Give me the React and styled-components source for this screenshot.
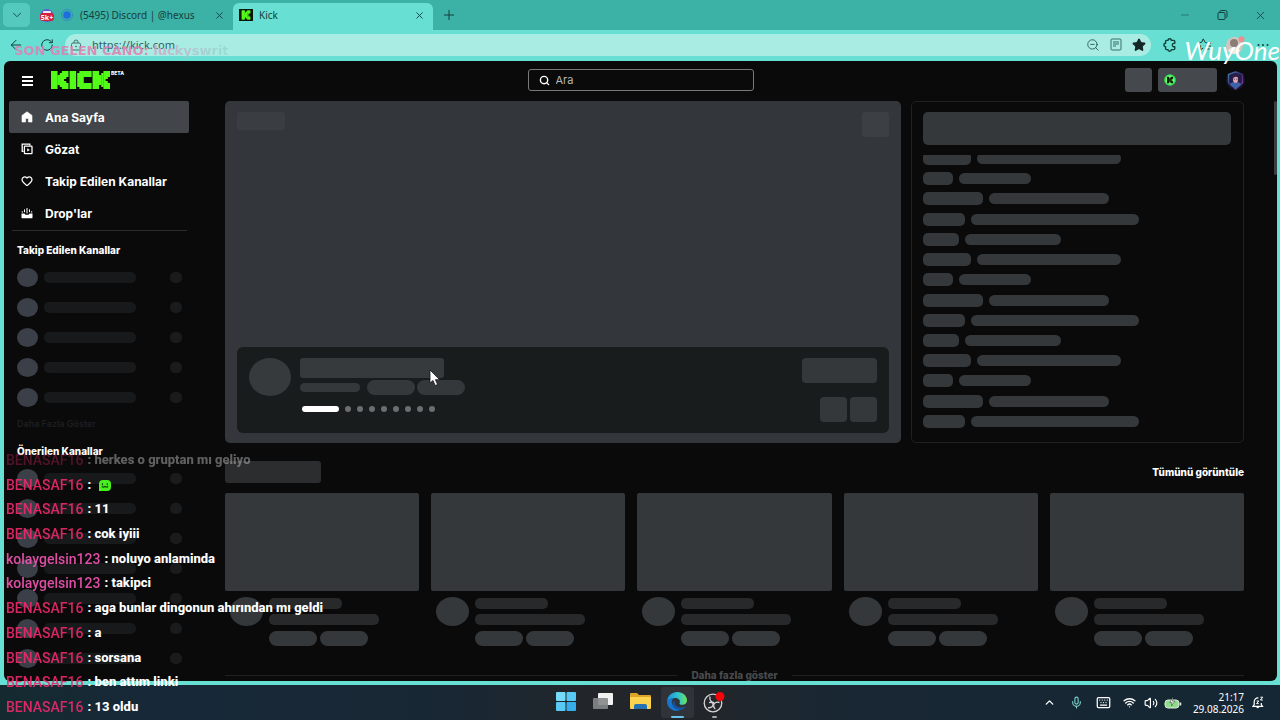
import React, { useState } from "react";
import styled, { createGlobalStyle } from "styled-components";
import {
  ArrowLeft,
  ChevronDown,
  ChevronUp,
  Heart,
  Keyboard,
  Mic,
  Minus,
  Plus,
  Puzzle,
  RotateCw,
  Search,
  Star,
  Volume2,
  Wifi,
  X,
  ZoomOut,
} from "lucide-react";

const GlobalStyle = createGlobalStyle`
  * {
    box-sizing: border-box;
  }
  body {
    margin: 0;
    overflow: hidden;
    background: #16252f;
  }
  button {
    border: 0;
    padding: 0;
    background: none;
    color: inherit;
    font: inherit;
  }
  a {
    color: inherit;
    text-decoration: none;
  }
  svg {
    display: block;
    flex-shrink: 0;
  }
`;

const Desktop = styled.div`
  position: relative;
  display: flex;
  flex-direction: column;
  height: 100vh;
  overflow: hidden;
  font-family: "Inter", sans-serif;
`;

/* browser window */
const Browser = styled.div`
  flex: 1;
  min-height: 0;
  display: flex;
  flex-direction: column;
  background: #67dfd2;
  color: #14403d;
  font-family: "Noto Sans", sans-serif;
`;
const TabBar = styled.div`
  display: flex;
  height: 30px;
  padding-left: 3px;
  background: #3cb1a6;
`;
const TabMenu = styled.button`
  display: flex;
  align-items: center;
  justify-content: center;
  width: 27px;
  height: 24px;
  margin-top: 3px;
  border-radius: 5px;
  background: #55c9bd;
`;
const Tab = styled.div`
  display: flex;
  align-items: center;
  gap: 6px;
  width: ${(props) => (props.$active ? "200px" : "203px")};
  height: 27px;
  margin-top: 3px;
  padding: 0 8px 3px ${(props) => (props.$active ? "6px" : "10px")};
  border-radius: 6px 6px 0 0;
  background: ${(props) => (props.$active ? "#67dfd2" : "transparent")};
  font-size: 10px;
`;
const TabTitle = styled.span`
  flex: 1;
  white-space: nowrap;
`;
const NewTab = styled.button`
  display: flex;
  align-items: center;
  margin-left: 8px;
`;
const WindowButtons = styled.div`
  display: flex;
  align-items: center;
  gap: 26px;
  margin-left: auto;
  padding-right: 13px;
`;
const Toolbar = styled.div`
  display: flex;
  align-items: center;
  height: 31px;
  padding: 0 9px 2px 8px;
`;
const ToolButton = styled.button`
  display: flex;
  align-items: center;
  justify-content: center;
  width: 16px;
  height: 16px;
  margin-right: ${(props) => props.$gap || "15px"};
`;
const Address = styled.div`
  flex: 1;
  display: flex;
  align-items: center;
  gap: 10px;
  height: 22px;
  margin-right: 11px;
  padding: 0 5px;
  border-radius: 11px;
  background: #a9ece3;
`;
const AddressInput = styled.input`
  flex: 1;
  min-width: 0;
  border: 0;
  padding: 0;
  background: transparent;
  outline: none;
  color: #35605d;
  font-family: "Noto Sans", sans-serif;
  font-size: 11px;
`;

/* kick page */
const Page = styled.div`
  flex: 1;
  min-height: 0;
  display: flex;
  flex-direction: column;
  margin: 0 3px 4px 4px;
  border-radius: 6px;
  overflow: hidden;
  background: #0a0a0b;
  color: #ffffff;
  font-family: "Inter", sans-serif;
`;
const Header = styled.header`
  display: grid;
  grid-template-columns: 1fr 226px 1fr;
  align-items: center;
  height: 40px;
  flex-shrink: 0;
  padding: 0 18px 2px;
`;
const Brand = styled.div`
  display: flex;
  align-items: center;
  gap: 18px;
`;
const LogoLink = styled.a`
  display: flex;
  align-items: flex-start;
  gap: 1px;
`;
const Beta = styled.span`
  font-size: 5px;
  line-height: 5px;
  font-weight: 800;
`;
const SearchBox = styled.label`
  display: flex;
  align-items: center;
  gap: 6px;
  height: 22px;
  padding: 0 10px;
  border: 1px solid #77797b;
  border-radius: 3px;
`;
const SearchInput = styled.input`
  flex: 1;
  min-width: 0;
  border: 0;
  padding: 0;
  outline: none;
  background: transparent;
  color: #ffffff;
  font-family: "Inter", sans-serif;
  font-size: 11px;
  &::placeholder {
    color: #b4b6b8;
    opacity: 1;
  }
`;
const Account = styled.div`
  display: flex;
  align-items: center;
  justify-content: flex-end;
  gap: 6px;
  padding-right: 14px;
`;
const AccountButton = styled.button`
  display: flex;
  align-items: center;
  width: ${(props) => props.$width};
  height: 24px;
  padding-left: 6px;
  border-radius: 3px;
  background: #45484c;
`;
const AvatarButton = styled.button`
  margin-left: 3px;
`;
const Content = styled.div`
  flex: 1;
  min-height: 0;
  display: flex;
  padding-left: 5px;
`;
const Sidebar = styled.aside`
  width: 180px;
  flex-shrink: 0;
`;
const NavItem = styled.a`
  display: flex;
  align-items: center;
  gap: 12px;
  height: 32px;
  padding-left: 12px;
  border-radius: 2px;
  background: ${(props) => (props.$active ? "#42464a" : "transparent")};
  font-size: 12px;
  font-weight: 700;
`;
const Divider = styled.hr`
  height: 1px;
  margin: 1px 2px 0 3px;
  border: 0;
  background: #2a2c2e;
`;
const SideTitle = styled.h2`
  margin: 0;
  padding: 11px 0 4px 8px;
  font-size: 10px;
  line-height: 16px;
  font-weight: 800;
`;
const ChannelRow = styled.div`
  display: flex;
  align-items: center;
  gap: 6px;
  height: 30px;
  padding: 0 7px 0 8px;
`;
const MoreChannels = styled.button`
  display: block;
  padding: 4px 0 0 8px;
  color: #1d1f20;
  font-size: 9px;
  line-height: 16px;
  font-weight: 600;
`;

const Bone = styled.div`
  flex-shrink: 0;
  width: ${(props) => props.$w};
  height: ${(props) => props.$h};
  border-radius: ${(props) => props.$r || "5px"};
  background: ${(props) => props.$tone || "#34383a"};
`;
const EndBone = styled(Bone)`
  margin-left: auto;
`;

const Main = styled.main`
  flex: 1;
  min-width: 0;
  overflow: hidden;
  padding: 0 30px 0 36px;
`;
const Scrollbar = styled.div`
  width: 3px;
  height: 74px;
  border-radius: 2px;
  background: #3b3e40;
`;
const TopRow = styled.div`
  display: flex;
  gap: 10px;
`;
const Hero = styled.section`
  flex: 1;
  display: flex;
  flex-direction: column;
  justify-content: space-between;
  min-height: 342px;
  padding: 11px 12px 10px;
  border-radius: 5px;
  background: #33373c;
`;
const HeroTop = styled.div`
  display: flex;
  justify-content: space-between;
  align-items: flex-start;
`;
const HeroCard = styled.div`
  display: flex;
  gap: 9px;
  padding: 11px 12px;
  border-radius: 6px;
  background: #181c1d;
`;
const HeroInfo = styled.div`
  flex: 1;
`;
const HeroTags = styled.div`
  display: flex;
  align-items: center;
  gap: 2px;
  margin: 2px 0 11px;
`;
const HeroTagSpace = styled.div`
  width: 65px;
`;
const Dots = styled.div`
  display: flex;
  gap: 6px;
  padding-left: 2px;
`;
const Dot = styled.button`
  width: ${(props) => (props.$active ? "37px" : "6px")};
  height: 6px;
  border-radius: 3px;
  background: ${(props) => (props.$active ? "#ffffff" : "#6b6e70")};
`;
const HeroActions = styled.div`
  display: flex;
  flex-direction: column;
  align-items: flex-end;
  gap: 14px;
`;
const HeroArrows = styled.div`
  display: flex;
  gap: 3px;
`;
const ChatPanel = styled.section`
  width: 333px;
  display: flex;
  flex-direction: column;
  gap: 10px;
  padding: 10px 12px 14px 11px;
  border: 1px solid #1f2123;
  border-radius: 5px;
`;
const ChatList = styled.div`
  flex: 1;
  display: flex;
  flex-direction: column;
  justify-content: space-between;
  overflow: hidden;
`;
const ChatRow = styled.div`
  display: flex;
  align-items: center;
  gap: 6px;
  &:first-child {
    margin-top: -3px;
  }
`;
const SectionHead = styled.div`
  display: flex;
  align-items: center;
  justify-content: space-between;
  margin: 18px 0 10px;
`;
const SeeAll = styled.a`
  font-size: 10px;
  line-height: 16px;
  font-weight: 800;
`;
const CardGrid = styled.div`
  display: grid;
  grid-template-columns: repeat(5, 1fr);
  gap: 12px;
`;
const CardInfo = styled.div`
  display: flex;
  gap: 6px;
  padding: 6px 0 0 5px;
`;
const CardLines = styled.div`
  display: flex;
  flex-direction: column;
  gap: 5px;
  padding-top: 1px;
`;
const CardTags = styled.div`
  display: flex;
  gap: 3px;
  padding-top: 1px;
`;
const ShowMore = styled.div`
  display: flex;
  align-items: center;
  gap: 14px;
  margin-top: 21px;
  color: #484a4c;
  font-size: 10px;
  line-height: 16px;
  font-weight: 800;
  &::before,
  &::after {
    content: "";
    flex: 1;
    height: 1px;
    background: #1f2022;
  }
`;

/* taskbar */
const Taskbar = styled.div`
  display: grid;
  grid-template-columns: 1fr auto 1fr;
  align-items: center;
  height: 35px;
  background: linear-gradient(90deg, #142a2f 0, #172838 12%, #182733 36%, #22262a 46%, #22262a 55%, #182733 66%, #152734 100%);
  color: #ffffff;
  font-family: "Noto Sans", sans-serif;
`;
const Apps = styled.div`
  grid-column: 2;
  display: flex;
  gap: 4px;
`;
const AppButton = styled.button`
  display: flex;
  flex-direction: column;
  align-items: center;
  justify-content: space-between;
  width: 33px;
  height: 31px;
  padding-top: 5px;
  border-radius: 3px;
  background: ${(props) => (props.$active ? "#30343a" : "transparent")};
`;
const AppLine = styled.span`
  width: ${(props) => props.$w};
  height: 2px;
  border-radius: 1px;
  background: ${(props) => props.$tone};
`;
const Tray = styled.div`
  display: flex;
  align-items: center;
  justify-content: flex-end;
  gap: 8px;
  padding-right: 16px;
`;
const TrayButton = styled.button`
  display: flex;
  justify-content: center;
  width: ${(props) => props.$w};
`;
const Clock = styled.time`
  margin-left: 3px;
  font-size: 10px;
  line-height: 12px;
  text-align: right;
`;

/* stream overlay, lies over the whole desktop */
const LastViewer = styled.div`
  position: absolute;
  top: 41px;
  left: 14px;
  color: #e07fb4;
  font-family: "DejaVu Sans", sans-serif;
  font-size: 13px;
  line-height: 20px;
  font-weight: 700;
  opacity: 0.85;
`;
const ViewerName = styled.span`
  background: linear-gradient(90deg, #d9a3c6, #8fded2);
  background-clip: text;
  color: transparent;
`;
const Signature = styled.div`
  position: absolute;
  top: 34px;
  right: 0;
  color: #ffffff;
  font-family: "Lato", sans-serif;
  font-size: 26px;
  line-height: 32px;
  font-weight: 400;
  font-style: italic;
`;
const StreamChat = styled.ul`
  position: absolute;
  left: 6px;
  bottom: 3px;
  display: flex;
  flex-direction: column;
  justify-content: space-between;
  height: 267px;
  margin: 0;
  padding: 0;
  list-style: none;
  color: #ffffff;
  font-family: "Roboto", sans-serif;
  font-size: 13px;
  line-height: 20px;
  font-weight: 800;
`;
const Message = styled.li`
  display: flex;
  align-items: center;
  gap: 4px;
  white-space: pre;
  opacity: ${(props) => (props.$faded ? 0.35 : 1)};
`;
const Author = styled.span`
  color: ${(props) => props.$tone};
  font-size: 14px;
  font-weight: 500;
  opacity: 0.9;
`;
const Pointer = styled.svg`
  position: absolute;
  left: 429px;
  top: 369px;
`;

const followed = [1, 2, 3, 4, 5];
const suggested = [1, 2, 3, 4, 5, 6, 7];
const slides = [0, 1, 2, 3, 4, 5, 6, 7, 8];
const chatRows = [
  [48, 144],
  [30, 72],
  [60, 120],
  [42, 168],
  [36, 96],
  [48, 144],
  [30, 72],
  [60, 120],
  [42, 168],
  [36, 96],
  [48, 144],
  [30, 72],
  [60, 120],
  [42, 168],
];
const cards = [1, 2, 3, 4, 5];
const red = "#f0286a";
const pink = "#f557b5";
const messages = [
  { author: "BENASAF16", tone: red, text: "herkes o gruptan mı geliyo", faded: true },
  { author: "BENASAF16", tone: red, emote: true },
  { author: "BENASAF16", tone: red, text: "11" },
  { author: "BENASAF16", tone: red, text: "cok iyiii" },
  { author: "kolaygelsin123", tone: pink, text: "noluyo anlaminda" },
  { author: "kolaygelsin123", tone: pink, text: "takipci" },
  { author: "BENASAF16", tone: red, text: "aga bunlar dingonun ahırından mı geldi" },
  { author: "BENASAF16", tone: red, text: "a" },
  { author: "BENASAF16", tone: red, text: "sorsana" },
  { author: "BENASAF16", tone: red, text: "ben attım linki" },
  { author: "BENASAF16", tone: red, text: "13 oldu" },
];

const KMark = ({ x = 0 }) => (
  <g transform={`translate(${x} 0)`}>
    <rect width="3" height="9" />
    <rect x="2.9" y="2" width="1.2" height="5" />
    <rect x="4" y="1" width="1.1" height="7" />
    <rect x="5" width="3" height="3" />
    <rect x="5" y="6" width="3" height="3" />
    <rect x="5" y="2.9" width="2" height="1.1" />
    <rect x="5" y="5" width="2" height="1.1" />
    <rect x="5" y="3.9" width="1" height="1.2" />
  </g>
);

const KickLogo = () => (
  <svg width="59" height="18" viewBox="0 0 27 9" preserveAspectRatio="none" fill="#53fc18">
    <KMark />
    <rect x="8.5" width="3" height="9" />
    <rect x="12" y="1" width="3" height="7" />
    <rect x="13" width="5.6" height="3" />
    <rect x="13" y="6" width="5.6" height="3" />
    <KMark x={19} />
  </svg>
);

const KickFavicon = () => (
  <svg width="14" height="12" viewBox="0 0 14 12">
    <rect width="14" height="12" fill="#08170a" />
    <g transform="translate(2.6 1.3) scale(1.1 1.04)" fill="#53fc18">
      <KMark />
    </g>
  </svg>
);

const DiscordFavicon = () => (
  <svg width="14" height="13" viewBox="0 0 14 13">
    <circle cx="7" cy="6.5" r="6.5" fill="#6556d8" />
    <rect x="3" y="2" width="8" height="3" rx="1" fill="#ece9ff" />
    <rect y="4" width="14" height="8" rx="3" fill="#d51d3c" />
    <text x="7" y="10.5" textAnchor="middle" fontSize="7" fontWeight="700" fill="#ffffff">
      5k+
    </text>
  </svg>
);

const HomeIcon = () => (
  <svg width="12" height="12" viewBox="0 0 12 12" fill="#ffffff">
    <path d="M6 .8 1 4.4V11h3.6V7.4h2.8V11H11V4.4z" stroke="#ffffff" strokeLinejoin="round" strokeWidth=".6" />
  </svg>
);

const BrowseIcon = () => (
  <svg width="12" height="12" viewBox="0 0 12 12" fill="none" stroke="#ffffff" strokeWidth="1.3">
    <path d="M2.6 8.3H1.2V1.2h7.6v1.4" />
    <rect x="3.4" y="3.2" width="7.6" height="7.4" rx=".6" />
    <path d="m6.2 5.2 2.6 1.7-2.6 1.7z" fill="#ffffff" stroke="none" />
  </svg>
);

const DropsIcon = () => (
  <svg width="12" height="12" viewBox="0 0 12 12" fill="#ffffff">
    <path d="M.5 6.4h3q.4 1.400 1.400 1.400h2.200q1 0 1.400-1.400h3v4q0 .9-.9.9H1.400q-.9 0-.9-.9z" />
    <path d="M6 1v5.400M3.500 2.400v2.800M8.500 2.400v2.800M1.300 4.200v1.400M10.700 4.200v1.400" stroke="#ffffff" strokeWidth="1" />
  </svg>
);

const MenuIcon = () => (
  <svg width="11" height="11" viewBox="0 0 11 11" fill="#ffffff">
    <rect y="1" width="11" height="2" />
    <rect y="5" width="11" height="2" />
    <rect y="9" width="11" height="2" />
  </svg>
);

const KickCoin = () => (
  <svg width="12" height="12" viewBox="0 0 12 12">
    <circle cx="6" cy="6" r="5.8" fill="#2fe45f" />
    <circle cx="6" cy="6" r="4.4" fill="#7dff63" />
    <g transform="translate(3 2.800) scale(.76 .72)" fill="#07210b">
      <KMark />
    </g>
  </svg>
);

const UserAvatar = () => (
  <svg width="19" height="19" viewBox="0 0 19 19">
    <defs>
      <linearGradient id="hex" x1="0" x2="1" y1="0" y2="1">
        <stop offset="0" stopColor="#3b87b0" />
        <stop offset=".5" stopColor="#3a2a70" />
        <stop offset="1" stopColor="#a03c9b" />
      </linearGradient>
    </defs>
    <circle cx="9.5" cy="9.5" r="9.5" fill="#15132c" />
    <path d="m9.5 1 7 2.400v8.400l-7 6.400-7-6.400V3.400z" fill="#241c4b" stroke="url(#hex)" strokeWidth="1.400" />
    <path d="M4 14c1-3 3-3 5.500-3s4.500 0 5.500 3l-5.500 4z" fill="#3d62a8" />
    <path d="M5.600 10.500C4.500 4.500 6.800 2.600 9.600 2.600s5 2 3.900 7.900z" fill="#2b1c48" />
    <ellipse cx="9.5" cy="8.4" rx="2.5" ry="3.400" fill="#dfa9ac" />
    <path d="M7 7.500q1-2.500 5-1.500-.5-3-2.500-3T7 7.500" fill="#2b1c48" />
    <path d="M7.800 8.200h1.200M10.200 8.200h1.200" stroke="#33203e" strokeWidth=".7" />
  </svg>
);

const ProfilePhoto = () => (
  <svg width="19" height="18" viewBox="0 0 19 18">
    <circle cx="8.5" cy="9.5" r="8.5" fill="#d2c5bd" />
    <circle cx="8" cy="7" r="4" fill="#8c7c76" />
    <path d="M2 15c2-5 10-5 12 0-3 4-9 4-12 0z" fill="#f1e8e2" />
    <circle cx="15.5" cy="3.2" r="3" fill="#ee8d8e" />
  </svg>
);

const ReaderIcon = () => (
  <svg width="12" height="13" viewBox="0 0 12 13" fill="none" stroke="#376e69">
    <rect x="1" y="1" width="10" height="11" rx="1" />
    <path d="M3 4h6M3 6h6M3 8h3" />
  </svg>
);

const PadlockIcon = () => (
  <svg width="12" height="12" viewBox="0 0 12 12" fill="none" stroke="#41716d">
    <rect x="1.5" y="4" width="9" height="7" rx="1.5" />
    <path d="M4 4V3a2 2 0 0 1 4 0v1" />
    <circle cx="6" cy="7.5" r=".5" />
  </svg>
);

/* round puzzle piece with a notch on the right */
const ExtensionsIcon = () => (
  <svg width="14" height="14" viewBox="0 0 14 14" fill="none" stroke="#14403d" strokeWidth="1.4" strokeLinejoin="round">
    <path d="M5 2.400a1.700 1.700 0 0 1 3.400 0h2.400q1 0 1 1v1.800q-2.400-.2-2.400 1.800t2.400 1.800v1.800q0 1-1 1H8.400a1.700 1.700 0 0 1-3.400 0H3.600q-1 0-1-1V8.700a1.700 1.700 0 0 1 0-3.400V3.400q0-1 1-1z" />
  </svg>
);

const FavoritesIcon = () => (
  <svg width="14" height="13" viewBox="0 0 14 13" fill="none" stroke="#14403d" strokeLinejoin="round">
    <path d="M8.6 5 6.2.9 4.6 4.4.8 5l2.8 2.8L3 12l3.3-2" />
    <path d="M9 5h5M8.5 8h5.5M8.5 11h4" />
  </svg>
);

const EmoteIcon = () => (
  <svg width="12" height="12" viewBox="0 0 12 12">
    <path d="M4 1h4q4 0 4 4v3q0 4-4 4H0V5q0-4 4-4z" fill="#48f11d" />
    <path d="M3.500 4.200v2M8.300 4.200v2M2.800 7.500q1.600 1.200 3.200 0 1.600 1.200 3.200 0" fill="none" stroke="#0e4a0a" strokeWidth="1.2" />
  </svg>
);

const WindowsIcon = () => (
  <svg width="20" height="19" viewBox="0 0 20 19" fill="#58c8f5">
    <rect width="9.5" height="9" rx="1" fill="#74dbfb" />
    <rect x="10.5" width="9.5" height="9" rx="1" />
    <rect y="10" width="9.5" height="9" rx="1" />
    <rect x="10.5" y="10" width="9.5" height="9" rx="1" fill="#36aeea" />
  </svg>
);

const TaskViewIcon = () => (
  <svg width="20" height="18" viewBox="0 0 20 18">
    <rect x="5" y="1" width="15" height="12" rx="1" fill="#f1f1f2" />
    <rect y="6" width="15" height="11" rx="1" fill="#85888a" fillOpacity=".9" />
  </svg>
);

const FolderIcon = () => (
  <svg width="21" height="18" viewBox="0 0 21 18">
    <path d="M0 2q0-1 1-1h6l2 2h11q1 0 1 1v12H0z" fill="#dda42c" />
    <path d="M0 5h21v11q0 1-1 1H1q-1 0-1-1z" fill="#fbd34f" />
    <path d="M4 17v-3q0-2 2-2h9q2 0 2 2v3z" fill="#2573b5" />
  </svg>
);

const EdgeIcon = () => (
  <svg width="20" height="19" viewBox="0 0 20 19">
    <defs>
      <linearGradient id="edgeTop" x1="0" x2="1">
        <stop offset="0" stopColor="#1a8fdc" />
        <stop offset=".55" stopColor="#2fc4cf" />
        <stop offset="1" stopColor="#6be35b" />
      </linearGradient>
    </defs>
    <path d="M0 9.5C.6 3.5 5 0 10.2 0 16 0 20 4 20 8.2c0 3-2.3 4.6-4.8 4.6-2.2 0-3.2-.8-2.6-1.8C14 8 11 6 8 6 4 6 1 8 0 9.5z" fill="url(#edgeTop)" />
    <path d="M0 9.5C1.5 6.8 4.6 5.6 7.4 6 4.8 7 4.3 10 5.4 12.6c1.6 3.8 6 5.2 9.2 5C8 21 0 17 0 9.5z" fill="#1775cd" />
    <path d="M8 8.6c-1.3 3.4 1.2 6.6 5.2 6.8 2.2.1 4-.5 5.3-1.2-1 1.8-2.4 3-4 3.7-4.6.4-9-2.3-9-6.1 0-1.6 1-2.8 2.5-3.2z" fill="#1554a4" />
  </svg>
);

const ObsIcon = () => (
  <svg width="22" height="21" viewBox="0 0 22 21">
    <circle cx="10" cy="11" r="8.8" fill="#24262a" stroke="#d3d5d6" strokeWidth="1.3" />
    <path
      d="M7 4.5c-.8 3.6 1.4 5.8 4 6.1M16.500 10.500c-3.600-1-6 .6-5.800 3.400M5 15.6c3.6.7 5.400-1.300 5-4.200M10.700 13.900q0 1.800 1.600 3M10 11.400Q8.500 9.800 6 10.600"
      fill="none"
      stroke="#d3d5d6"
      strokeWidth="1.3"
    />
    <circle cx="17" cy="4.5" r="4.5" fill="#f50408" />
  </svg>
);

const BatteryIcon = () => (
  <svg width="18" height="12" viewBox="0 0 18 12">
    <rect x="1" y="3" width="14" height="8" rx="3" fill="#8fdc8a" stroke="#dfe9e2" />
    <path d="M16.5 5.5v3" stroke="#dfe9e2" strokeWidth="1.5" />
    <path d="M9 0 5.8 5.6h2.4L7.4 9l3.6-4.8H8.5z" fill="#ffffff" stroke="#1b3327" strokeWidth=".5" />
  </svg>
);

const BellIcon = () => (
  <svg width="12" height="13" viewBox="0 0 12 13" fill="none" stroke="#ffffff" strokeWidth="1.200">
    <path d="M6.500 2C4 1.600 2.200 3.400 2.200 6v2.500L1 10.300h9.500L9.300 8.500V7M4.400 10.500q1.400 2.200 2.800 0" />
    <path d="M4.600 5h2.200L4.600 7.600h2.200M8.400 1.200h2.400L8.400 4h2.400" strokeWidth="1" />
  </svg>
);

const Channel = () => (
  <ChannelRow>
    <Bone $w="21px" $h="19px" $r="50%" $tone="#3a3f48" />
    <Bone $w="92px" $h="11px" $tone="#17191a" />
    <EndBone $w="12px" $h="11px" $tone="#191b1c" />
  </ChannelRow>
);

const StreamCard = () => (
  <article>
    <Bone $w="100%" $h="98px" $r="2px" />
    <CardInfo>
      <Bone $w="33px" $h="29px" $r="50%" />
      <CardLines>
        <Bone $w="73px" $h="11px" $tone="#27292b" />
        <Bone $w="110px" $h="11px" $tone="#27292b" />
        <CardTags>
          <Bone $w="48px" $h="15px" $r="8px" />
          <Bone $w="48px" $h="15px" $r="8px" />
        </CardTags>
      </CardLines>
    </CardInfo>
  </article>
);

const App = () => {
  const [slide, setSlide] = useState(0);
  const [url, setUrl] = useState("https://kick.com");
  const [query, setQuery] = useState("");
  return (
    <Desktop>
      <GlobalStyle />
      <Browser>
        <TabBar>
          <TabMenu aria-label="Sekme menüsü">
            <ChevronDown size={14} strokeWidth={1.5} />
          </TabMenu>
          <Tab>
            <DiscordFavicon />
            <svg width="14" height="14" viewBox="0 0 14 14">
              <circle cx="7" cy="7" r="5.5" fill="none" stroke="#318cc1" />
              <circle cx="7" cy="7" r="3.8" fill="#1d6fe0" />
            </svg>
            <TabTitle>(5495) Discord | @hexus</TabTitle>
            <button aria-label="Sekmeyi kapat">
              <X size={11} strokeWidth={2} />
            </button>
          </Tab>
          <Tab $active>
            <KickFavicon />
            <TabTitle>Kick</TabTitle>
            <button aria-label="Sekmeyi kapat">
              <X size={11} strokeWidth={2} />
            </button>
          </Tab>
          <NewTab aria-label="Yeni sekme">
            <Plus size={16} strokeWidth={1.5} />
          </NewTab>
          <WindowButtons>
            <button aria-label="Simge durumuna küçült">
              <Minus size={12} strokeWidth={1} />
            </button>
            <button aria-label="Geri yükle">
              <svg width="11" height="10" viewBox="0 0 11 10" fill="none" stroke="#14403d">
                <rect x="1" y="2.5" width="7" height="7" rx="1" />
                <path d="M3 2.5v-1q0-1 1-1h4.5q1.5 0 1.5 1.5v4.5q0 1-1 1" />
              </svg>
            </button>
            <button aria-label="Kapat">
              <X size={13} strokeWidth={1.5} />
            </button>
          </WindowButtons>
        </TabBar>
        <Toolbar>
          <ToolButton aria-label="Geri">
            <ArrowLeft size={16} strokeWidth={1.5} />
          </ToolButton>
          <ToolButton aria-label="Yenile" $gap="10px">
            <RotateCw size={14} strokeWidth={1.7} />
          </ToolButton>
          <Address>
            <PadlockIcon />
            <AddressInput aria-label="Adres" value={url} onChange={(e) => setUrl(e.target.value)} />
            <ZoomOut size={14} strokeWidth={1.3} />
            <ReaderIcon />
            <Star size={14} fill="#152726" color="#152726" />
          </Address>
          <ToolButton aria-label="Uzantılar" $gap="18px">
            <ExtensionsIcon />
          </ToolButton>
          <ToolButton aria-label="Sık kullanılanlar">
            <FavoritesIcon />
          </ToolButton>
          <ToolButton aria-label="Profil" $gap="12px">
            <ProfilePhoto />
          </ToolButton>
          <ToolButton aria-label="Ayarlar" $gap="0">
            <svg width="12" height="4" viewBox="0 0 12 4" fill="#14403d">
              <circle cx="1.5" cy="2" r="1" />
              <circle cx="6" cy="2" r="1" />
              <circle cx="10.5" cy="2" r="1" />
            </svg>
          </ToolButton>
        </Toolbar>
        <Page>
          <Header>
            <Brand>
              <button aria-label="Menü">
                <MenuIcon />
              </button>
              <LogoLink href="#" aria-label="Kick">
                <KickLogo />
                <Beta>BETA</Beta>
              </LogoLink>
            </Brand>
            <SearchBox>
              <Search size={11} strokeWidth={3} />
              <SearchInput aria-label="Ara" placeholder="Ara" value={query} onChange={(e) => setQuery(e.target.value)} />
            </SearchBox>
            <Account>
              <AccountButton aria-label="Bildirimler" $width="27px" />
              <AccountButton aria-label="Kick bakiyesi" $width="59px">
                <KickCoin />
              </AccountButton>
              <AvatarButton aria-label="Hesap">
                <UserAvatar />
              </AvatarButton>
            </Account>
          </Header>
          <Content>
            <Sidebar>
              <nav>
                <NavItem href="#" $active>
                  <HomeIcon />
                  Ana Sayfa
                </NavItem>
                <NavItem href="#">
                  <BrowseIcon />
                  Gözat
                </NavItem>
                <NavItem href="#">
                  <Heart size={12} strokeWidth={2.5} />
                  Takip Edilen Kanallar
                </NavItem>
                <NavItem href="#">
                  <DropsIcon />
                  Drop'lar
                </NavItem>
              </nav>
              <Divider />
              <SideTitle>Takip Edilen Kanallar</SideTitle>
              {followed.map((id) => (
                <Channel key={id} />
              ))}
              <MoreChannels>Daha Fazla Göster</MoreChannels>
              <SideTitle>Önerilen Kanallar</SideTitle>
              {suggested.map((id) => (
                <Channel key={id} />
              ))}
            </Sidebar>
            <Main>
              <TopRow>
                <Hero>
                  <HeroTop>
                    <Bone $w="48px" $h="18px" $r="3px" $tone="#3a3e42" />
                    <Bone $w="27px" $h="25px" $r="3px" $tone="#3c4044" />
                  </HeroTop>
                  <HeroCard>
                    <Bone $w="42px" $h="38px" $r="50%" $tone="#363a3c" />
                    <HeroInfo>
                      <Bone $w="144px" $h="20px" $r="3px" $tone="#363a3c" />
                      <HeroTags>
                        <HeroTagSpace>
                          <Bone $w="60px" $h="9px" $tone="#34383a" />
                        </HeroTagSpace>
                        <Bone $w="48px" $h="15px" $r="8px" />
                        <Bone $w="48px" $h="15px" $r="8px" />
                      </HeroTags>
                      <Dots>
                        {slides.map((n) => (
                          <Dot key={n} aria-label={`Yayın ${n + 1}`} $active={n === slide} onClick={() => setSlide(n)} />
                        ))}
                      </Dots>
                    </HeroInfo>
                    <HeroActions>
                      <Bone $w="75px" $h="25px" $r="4px" />
                      <HeroArrows>
                        <Bone $w="27px" $h="25px" $r="4px" />
                        <Bone $w="27px" $h="25px" $r="4px" />
                      </HeroArrows>
                    </HeroActions>
                  </HeroCard>
                </Hero>
                <ChatPanel>
                  <Bone $w="100%" $h="33px" />
                  <ChatList>
                    {chatRows.map(([name, text], i) => (
                      <ChatRow key={i}>
                        <Bone $w={`${name}px`} $h="13px" />
                        <Bone $w={`${text}px`} $h="11px" $r="6px" />
                      </ChatRow>
                    ))}
                  </ChatList>
                </ChatPanel>
              </TopRow>
              <SectionHead>
                <Bone $w="96px" $h="22px" $r="3px" $tone="#2b2d2f" />
                <SeeAll href="#">Tümünü görüntüle</SeeAll>
              </SectionHead>
              <CardGrid>
                {cards.map((id) => (
                  <StreamCard key={id} />
                ))}
              </CardGrid>
              <ShowMore>
                <button>Daha fazla göster</button>
              </ShowMore>
            </Main>
            <Scrollbar />
          </Content>
        </Page>
      </Browser>

      <Taskbar>
        <Apps>
          <AppButton aria-label="Başlat">
            <WindowsIcon />
          </AppButton>
          <AppButton aria-label="Görev görünümü">
            <TaskViewIcon />
          </AppButton>
          <AppButton aria-label="Dosya Gezgini">
            <FolderIcon />
          </AppButton>
          <AppButton aria-label="Edge" $active>
            <EdgeIcon />
            <AppLine $w="13px" $tone="#64c2ec" />
          </AppButton>
          <AppButton aria-label="OBS">
            <ObsIcon />
            <AppLine $w="5px" $tone="#a3a6a8" />
          </AppButton>
        </Apps>
        <Tray>
          <TrayButton aria-label="Gizli simgeler" $w="20px">
            <ChevronUp size={13} strokeWidth={2.5} />
          </TrayButton>
          <TrayButton aria-label="Mikrofon" $w="18px">
            <Mic size={13} color="#7fd6d0" />
          </TrayButton>
          <TrayButton aria-label="Klavye" $w="20px">
            <Keyboard size={15} />
          </TrayButton>
          <TrayButton aria-label="Ağ" $w="16px">
            <Wifi size={13} strokeWidth={2.5} />
          </TrayButton>
          <TrayButton aria-label="Ses" $w="10px">
            <Volume2 size={14} />
          </TrayButton>
          <TrayButton aria-label="Pil" $w="18px">
            <BatteryIcon />
          </TrayButton>
          <Clock>
            21:17
            <br />
            29.08.2026
          </Clock>
          <TrayButton aria-label="Bildirimler" $w="12px">
            <BellIcon />
          </TrayButton>
        </Tray>
      </Taskbar>

      <LastViewer>
        SON GELEN CANO: <ViewerName>luckyswrit</ViewerName>
      </LastViewer>
      <Signature>WuyOne</Signature>
      <StreamChat>
        {messages.map((m, i) => (
          <Message key={i} $faded={m.faded}>
            <Author $tone={m.tone}>{m.author}</Author>
            <span>: {m.text}</span>
            {m.emote && <EmoteIcon />}
          </Message>
        ))}
      </StreamChat>
      <Pointer width="12" height="18" viewBox="0 0 12 18">
        <path d="M1 1v13l3-2.5 2.2 5 2.4-1-2.2-4.800h4.200z" fill="#ffffff" stroke="#14181a" strokeWidth=".8" />
      </Pointer>
    </Desktop>
  );
};

export default App;
